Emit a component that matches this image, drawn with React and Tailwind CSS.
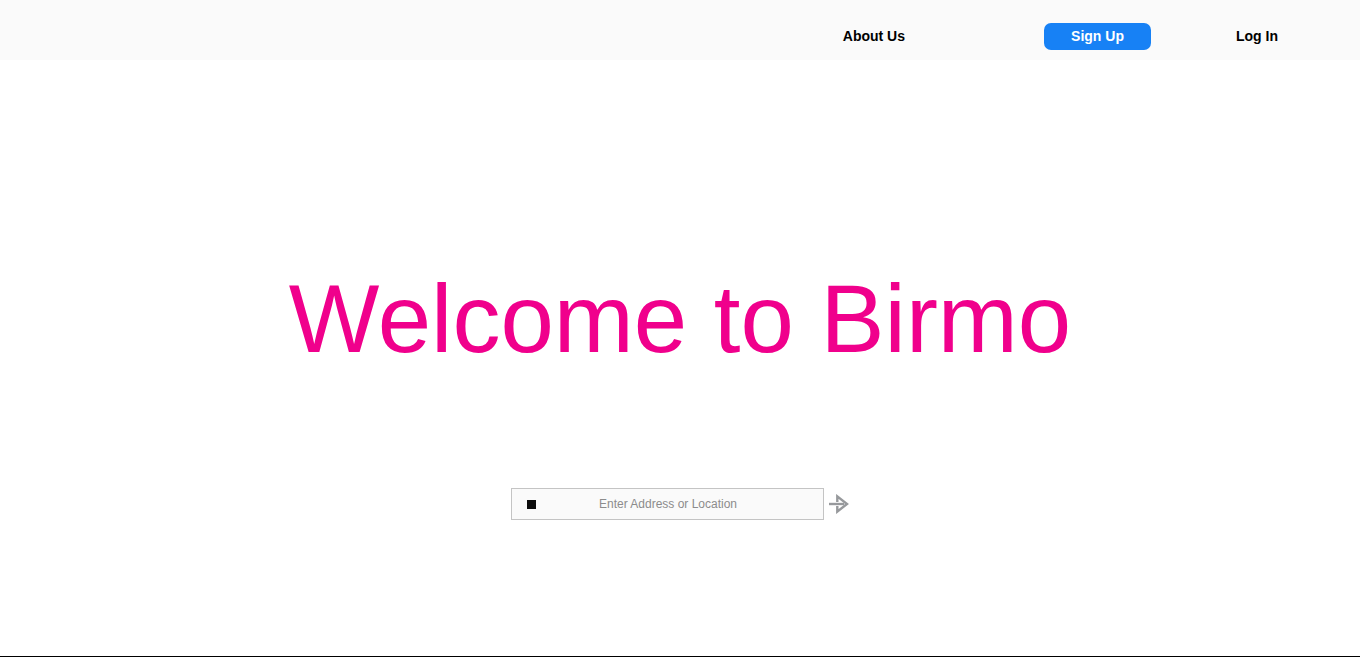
export default function App() {
  return (
    <div className="flex min-h-screen flex-col border-b border-black bg-white font-['Liberation_Sans',Arial,sans-serif] text-black">
      <header className="flex h-[60px] justify-end bg-[#fafafa] pt-[23px] pr-[82px]">
        <nav className="flex h-[27px] items-start text-sm leading-[26px] font-bold">
          <a href="#about" className="mr-[139px]">About Us</a>
          <button type="button" className="mr-[85px] w-[107px] rounded-[7px] bg-[#1781f5] pb-px text-white">Sign Up</button>
          <a href="#login">Log In</a>
        </nav>
      </header>
      <main className="flex grow flex-col items-center pt-[204px]">
        <h1 className="text-8xl leading-[110px] text-[#f0008c]">Welcome to Birmo</h1>
        <form className="mt-[114px] flex items-center gap-[5px]" onSubmit={(e) => e.preventDefault()}>
          <label className="flex h-8 w-[313px] items-center border border-[#c4c4c4] bg-[#fafafa] pl-[15px]">
            <span className="size-[9px] shrink-0 bg-[#0c0c0c]" />
            <input
              type="text"
              aria-label="Address or location"
              placeholder="Enter Address or Location"
              className="min-w-0 grow bg-transparent pr-[23px] text-center text-xs outline-none placeholder:text-[#8c8c8c]"
            />
          </label>
          <button type="submit" aria-label="Search">
            <svg viewBox="0 0 20 20" className="block size-5" fill="none" stroke="#97999c" strokeWidth="2.4">
              <path d="M0 10H15" />
              <path d="M8.3 8V2.4L18 10L8.3 17.6V12" />
            </svg>
          </button>
        </form>
      </main>
    </div>
  );
}
